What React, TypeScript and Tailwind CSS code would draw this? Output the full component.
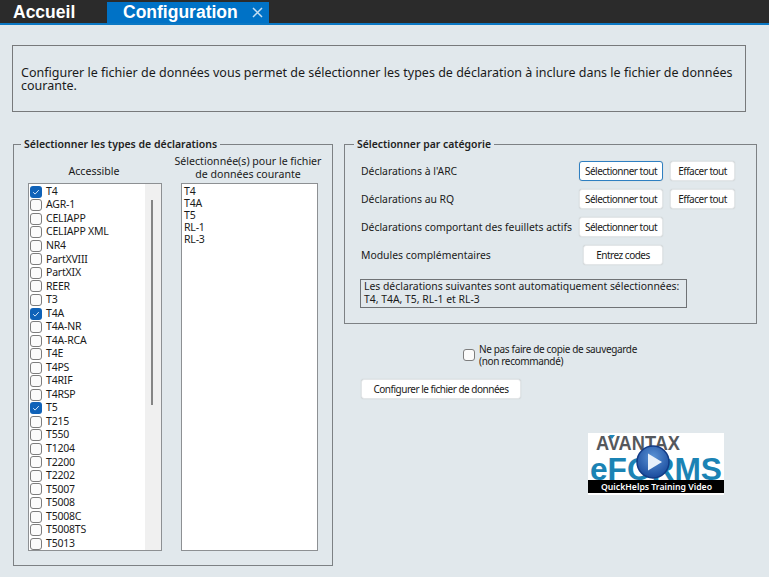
const FONT = "font-['Noto_Sans','Open_Sans',sans-serif]";

const accessible = [
  'T4', 'AGR-1', 'CELIAPP', 'CELIAPP XML', 'NR4', 'PartXVIII', 'PartXIX', 'REER', 'T3',
  'T4A', 'T4A-NR', 'T4A-RCA', 'T4E', 'T4PS', 'T4RIF', 'T4RSP', 'T5', 'T215', 'T550',
  'T1204', 'T2200', 'T2202', 'T5007', 'T5008', 'T5008C', 'T5008TS', 'T5013',
];
const checked = ['T4', 'T4A', 'T5'];
const selected = ['T4', 'T4A', 'T5', 'RL-1', 'RL-3'];

function Check({ on }: { on: boolean }) {
  if (on) {
    return (
      <span className="flex h-[12px] w-[12px] shrink-0 items-center justify-center rounded-[3px] bg-[#0f62b8]">
        <svg width="8" height="8" viewBox="0 0 8 8" fill="none" aria-hidden="true">
          <path d="M1.2 4.2l1.9 1.9 3.7-4" stroke="#cfe3f7" strokeWidth="1" />
        </svg>
      </span>
    );
  }
  return <span className="h-[12px] w-[12px] shrink-0 rounded-[3px] border border-[#7d7d7d] bg-[#fbfbfb]" />;
}

function Btn({ children, className = '' }: { children: React.ReactNode; className?: string }) {
  return (
    <button
      type="button"
      className={`flex h-[20px] items-center justify-center rounded-[3px] border border-[#e3e6e8] bg-white pt-[1px] text-[10px] tracking-[-0.5px] text-[#1a1a1a] shadow-[0_0_1px_#b8bcbf] ${className}`}
    >
      {children}
    </button>
  );
}

function Logo() {
  return (
    <svg width="136" height="62" viewBox="0 0 136 62" className="block" aria-label="Avantax eForms">
      <rect width="136" height="62" fill="#ffffff" />
      <text x="8" y="17" fontFamily="Liberation Sans" fontWeight="700" fontSize="21" fill="#55585c" textLength="84" lengthAdjust="spacingAndGlyphs">AVANTAX</text>
      <path d="M21 2h6l-3 4z" fill="#1d87ba" />
      <text x="2" y="47" fontFamily="Liberation Sans" fontWeight="700" fontSize="32" fill="#1b83b4" textLength="132" lengthAdjust="spacingAndGlyphs">eFORMS</text>
      <defs>
        <radialGradient id="play" cx="0.5" cy="0.35" r="0.75">
          <stop offset="0" stopColor="#5b93d6" />
          <stop offset="1" stopColor="#0f3f93" />
        </radialGradient>
      </defs>
      <circle cx="65" cy="29" r="16" fill="url(#play)" stroke="#123a85" strokeWidth="1.5" />
      <path d="M60 20.500l14 8.500-14 8.500z" fill="#e8f0fa" />
      <rect y="47" width="136" height="13" fill="#000000" />
      <text x="13" y="57" fontFamily="Noto Sans" fontWeight="600" fontSize="9.500" fill="#ffffff" textLength="111" lengthAdjust="spacingAndGlyphs">QuickHelps Training Video</text>
    </svg>
  );
}

export default function App() {
  return (
    <div className={`flex h-[577px] w-[769px] flex-col overflow-hidden bg-[#e1e8ec] text-[#1a1a1a] ${FONT}`}>
      <div className="flex h-[25px] shrink-0 items-end border-b-2 border-[#0b78c4] bg-[#2b2b2b] font-['Liberation_Sans',sans-serif] text-[17.5px] font-bold text-white">
        <div className="flex h-[21px] w-[107px] items-center pl-[13px]">Accueil</div>
        <div className="flex h-[21px] w-[162px] items-center bg-[#0072c6] pl-[16px]">
          Configuration
          <svg width="11" height="11" viewBox="0 0 11 11" fill="none" className="ml-[14px]" aria-hidden="true">
            <path d="M1 1l9 9M10 1l-9 9" stroke="#c4dff3" strokeWidth="1.5" />
          </svg>
        </div>
      </div>

      <div className="mx-[12px] mt-[20px] flex h-[67px] w-[734px] shrink-0 items-center border border-[#77797b] px-[8px] text-[12.5px] leading-[13px]">
        <p>
          Configurer le fichier de données vous permet de sélectionner les types de déclaration à inclure dans le fichier de données courante.
        </p>
      </div>

      <div className="mt-[25px] flex items-start">
        <fieldset className="ml-[13px] h-[429px] w-[320px] shrink-0 border border-[#7d8184] px-[14px]">
          <legend className="ml-[-7px] px-[3px] text-[10.5px] leading-[14px] font-semibold text-[#222]">
            Sélectionner les types de déclarations
          </legend>
          <div className="mt-[2px] flex gap-[19px]">
            <div className="w-[134px]">
              <div className="flex h-[30px] items-end justify-center pb-[5px] pr-[2px] text-[10.6px] leading-[13px]">Accessible</div>
              <div className="flex h-[368px] overflow-hidden border border-[#8d9093] bg-white">
                <ul className="flex-1 pt-[1px] pl-[1px]">
                  {accessible.map((name) => (
                    <li key={name} className="flex h-[13.54px] items-center gap-[4px] text-[10.5px] tracking-[-0.2px]">
                      <Check on={checked.includes(name)} />
                      {name}
                    </li>
                  ))}
                </ul>
                <div className="relative w-[16px] shrink-0 bg-[#f0f0f0]">
                  <div className="absolute top-[16px] left-[6px] h-[205px] w-[2px] bg-[#858585]" />
                </div>
              </div>
            </div>
            <div className="w-[137px]">
              <div className="flex h-[30px] items-center justify-center pr-[3px] text-center text-[10.6px] leading-[13px] whitespace-nowrap">
                Sélectionnée(s) pour le fichier
                <br />
                de données courante
              </div>
              <ul className="h-[368px] border border-[#8d9093] bg-white px-[2px] pt-[1px] text-[10.5px] leading-[12px] tracking-[-0.2px]">
                {selected.map((name) => (
                  <li key={name}>{name}</li>
                ))}
              </ul>
            </div>
          </div>
        </fieldset>

        <div className="ml-[11px] flex w-[413px] flex-col">
          <fieldset className="h-[187px] border border-[#7d8184] pl-[16px]">
            <legend className="ml-[-7px] px-[3px] text-[10.4px] leading-[14px] font-semibold text-[#222]">
              Sélectionner par catégorie
            </legend>
            <div className="mt-[10px] flex h-[20px] items-center text-[10.4px]">
              <span className="w-[218px] pt-[1px]">Déclarations à l'ARC</span>
              <Btn className="w-[84px] border-[#2f7fc1]!">Sélectionner tout</Btn>
              <Btn className="ml-[7px] w-[65px]">Effacer tout</Btn>
            </div>
            <div className="mt-[8px] flex h-[20px] items-center text-[10.4px]">
              <span className="w-[218px] pt-[1px]">Déclarations au RQ</span>
              <Btn className="w-[84px]">Sélectionner tout</Btn>
              <Btn className="ml-[7px] w-[65px]">Effacer tout</Btn>
            </div>
            <div className="mt-[8px] flex h-[20px] items-center text-[10.4px]">
              <span className="w-[218px] pt-[1px] whitespace-nowrap">Déclarations comportant des feuillets actifs</span>
              <Btn className="w-[84px]">Sélectionner tout</Btn>
            </div>
            <div className="mt-[8px] flex h-[20px] items-center text-[10.4px]">
              <span className="w-[222px] pt-[1px]">Modules complémentaires</span>
              <Btn className="w-[80px]">Entrez codes</Btn>
            </div>
            <div className="mt-[14px] ml-[-1px] h-[29px] w-[327px] border border-[#6f7275] px-[3px] text-[10.4px] leading-[13px]">
              Les déclarations suivantes sont automatiquement sélectionnées:
              <br />
              T4, T4A, T5, RL-1 et RL-3
            </div>
          </fieldset>

          <div className="mt-[19px] ml-[119px] flex items-center gap-[4px] text-[10px] leading-[12px] tracking-[-0.35px]">
            <Check on={false} />
            <span>
              Ne pas faire de copie de sauvegarde
              <br />
              (non recommandé)
            </span>
          </div>

          <Btn className="mt-[12px] ml-[17px] w-[160px]">Configurer le fichier de données</Btn>

          <div className="mt-[34px] ml-[244px]">
            <Logo />
          </div>
        </div>
      </div>
    </div>
  );
}
